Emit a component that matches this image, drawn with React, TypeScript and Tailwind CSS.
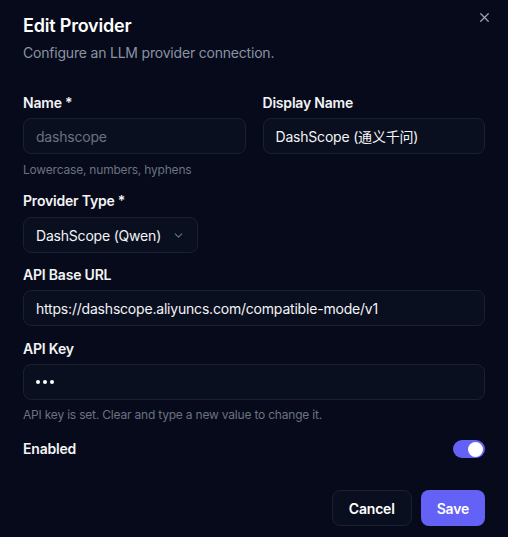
import React from "react";

const font = { fontFamily: "Inter, 'Noto Sans CJK SC', sans-serif" };

function Label({ children }: { children: React.ReactNode }) {
  return <div className="text-[14px] leading-5 font-semibold text-[#f3f4f6]">{children}</div>;
}

function Field({ value, muted, className = "" }: { value: string; muted?: boolean; className?: string }) {
  return (
    <div
      className={`h-9 rounded-lg border border-[#1a2030] bg-[#0a0f1f] px-3 flex items-center text-[14px] ${
        muted ? "text-[#6b7280]" : "text-[#f3f4f6]"
      } ${className}`}
    >
      {value}
    </div>
  );
}

export default function App() {
  return (
    <div className="w-[508px] h-[537px] bg-[#060a1a] px-[23px] pt-[12px] relative tracking-[-0.2px]" style={font}>
      <button className="absolute right-[16px] top-[10px] text-[#9ca3af]">
        <svg width="15" height="15" viewBox="0 0 24 24" fill="none" stroke="currentColor" strokeWidth="2" strokeLinecap="round">
          <path d="M18 6 6 18M6 6l12 12" />
        </svg>
      </button>
      <div className="text-[18px] leading-7 font-semibold text-white">Edit Provider</div>
      <div className="mt-[3px] text-[14px] leading-5 text-[#8b93a3]">Configure an LLM provider connection.</div>

      <div className="mt-[30px] grid grid-cols-2 gap-x-[17px]">
        <div className="flex flex-col gap-[5px]">
          <Label>Name *</Label>
          <Field value="dashscope" muted />
        </div>
        <div className="flex flex-col gap-[5px]">
          <Label>Display Name</Label>
          <Field value="DashScope (通义千问)" />
        </div>
      </div>
      <div className="mt-2 text-[12px] leading-4 text-[#6b7280]">Lowercase, numbers, hyphens</div>

      <div className="mt-[13px] flex flex-col gap-[6px]">
        <Label>Provider Type *</Label>
        <div className="h-9 w-[175px] rounded-lg border border-[#1a2030] bg-[#0a0f1f] pl-3 pr-3 flex items-center justify-between text-[14px] text-[#f3f4f6]">
          <span>DashScope (Qwen)</span>
          <svg width="13" height="13" viewBox="0 0 24 24" fill="none" stroke="#6b7280" strokeWidth="2" strokeLinecap="round" strokeLinejoin="round">
            <path d="m6 9 6 6 6-6" />
          </svg>
        </div>
      </div>

      <div className="mt-[12px] flex flex-col gap-[5px]">
        <Label>API Base URL</Label>
        <Field value="https://dashscope.aliyuncs.com/compatible-mode/v1" />
      </div>

      <div className="mt-[13px] flex flex-col gap-[5px]">
        <Label>API Key</Label>
        <div className="h-9 rounded-lg border border-[#1a2030] bg-[#0a0f1f] px-3 flex items-center gap-[3px]">
          <span className="w-[4px] h-[4px] rounded-full bg-white" />
          <span className="w-[4px] h-[4px] rounded-full bg-white" />
          <span className="w-[4px] h-[4px] rounded-full bg-white" />
        </div>
      </div>
      <div className="mt-[7px] text-[12px] leading-4 text-[#6b7280]">
        API key is set. Clear and type a new value to change it.
      </div>

      <div className="mt-[16px] flex items-center justify-between">
        <Label>Enabled</Label>
        <div className="w-8 h-[18px] rounded-full bg-[#6461f6] flex items-center justify-end px-[2px]">
          <span className="w-[15px] h-[15px] rounded-full bg-white" />
        </div>
      </div>

      <div className="mt-[31px] flex justify-end gap-[9px]">
        <button className="h-9 px-4 rounded-lg border border-[#1a2030] bg-[#0a0f1f] text-[14px] font-semibold text-white">
          Cancel
        </button>
        <button className="h-9 px-4 rounded-lg bg-[#6461f6] text-[14px] font-semibold text-white">Save</button>
      </div>
    </div>
  );
}
